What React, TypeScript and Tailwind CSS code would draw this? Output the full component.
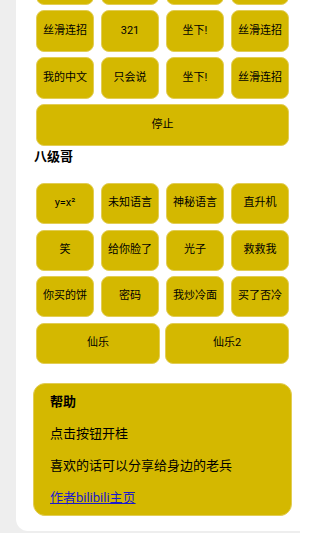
import React from "react";

const rowA = ["丝滑连招", "321", "坐下!", "丝滑连招"];
const rowB = ["丝滑连招", "321", "坐下!", "丝滑连招"];
const rowC = ["我的中文", "只会说", "坐下!", "丝滑连招"];

const baji = [
  "y=x²", "未知语言", "神秘语言", "直升机",
  "笑", "给你脸了", "光子", "救救我",
  "你买的饼", "密码", "我炒冷面", "买了否冷",
];

function Btn({ label, h }: { label: string; h: string }) {
  return (
    <button
      className={`${h} min-w-0 rounded-[8px] bg-[#d4b800] border border-[#e2cd55] text-[11px] text-black flex items-center justify-center whitespace-nowrap`}
    >
      {label}
    </button>
  );
}

export default function App() {
  return (
    <div
      className="w-[300px] h-[533px] overflow-hidden bg-[#eeeeee] pl-4"
      style={{ fontFamily: 'Roboto, "Noto Sans CJK SC", sans-serif' }}
    >
      <div className="-mt-[37px] bg-white rounded-bl-[12px] pl-5 pr-[11px] pb-[15px]">
        {/* 普通 */}
        <div className="grid grid-cols-[repeat(4,minmax(0,1fr))] gap-x-[7px] gap-y-[5px]">
          {[...rowA, ...rowB, ...rowC].map((t, i) => (
            <Btn key={i} label={t} h="h-[42px]" />
          ))}
          <div className="col-span-4">
            <Btn label="停止" h="h-[42px] w-full" />
          </div>
        </div>

        {/* 八级哥 */}
        <h2 className="mt-[2px] text-[13px] leading-[18px] font-bold text-black -ml-[2px]">八级哥</h2>
        <div className="mt-[17px] grid grid-cols-[repeat(4,minmax(0,1fr))] gap-x-[7px] gap-y-[5.5px]">
          {baji.map((t, i) => (
            <Btn key={i} label={t} h="h-[41px]" />
          ))}
        </div>
        <div className="mt-[5.5px] grid grid-cols-[repeat(2,minmax(0,1fr))] gap-x-[5px]">
          <Btn label="仙乐" h="h-[41px]" />
          <Btn label="仙乐2" h="h-[41px]" />
        </div>

        {/* 帮助 */}
        <div className="mt-[19px] -mx-[3px] rounded-[12px] bg-[#d4b800] border border-[#e2cd55] pl-[16px] pt-[8px] pb-[7px] flex flex-col gap-[12px] text-[13px] leading-[20px] text-black">
          <div className="font-bold">帮助</div>
          <p>点击按钮开桂</p>
          <p>喜欢的话可以分享给身边的老兵</p>
          <a href="#" className="text-[#1a1acc] underline">作者bilibili主页</a>
        </div>
      </div>
    </div>
  );
}
